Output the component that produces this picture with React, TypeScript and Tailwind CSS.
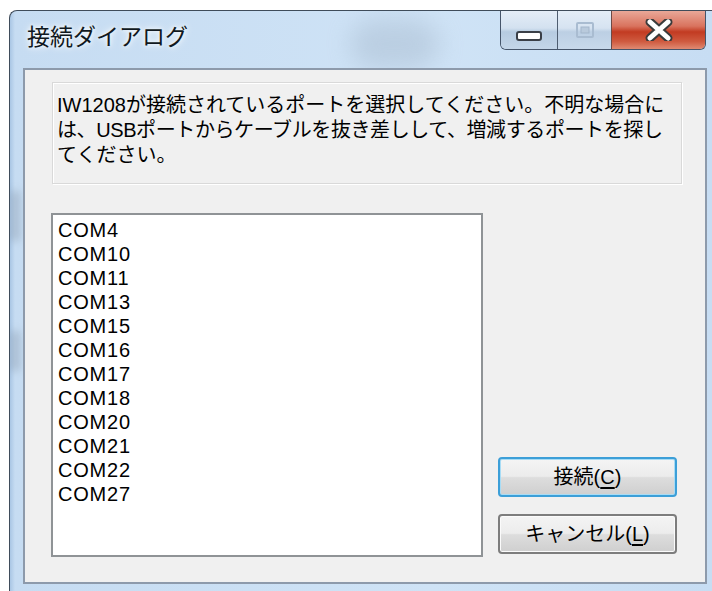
import React from "react";

const ports = [
  "COM4",
  "COM10",
  "COM11",
  "COM13",
  "COM15",
  "COM16",
  "COM17",
  "COM18",
  "COM20",
  "COM21",
  "COM22",
  "COM27",
];

function MinimizeGlyph() {
  return (
    <svg width="26" height="10" viewBox="0 0 26 10">
      <rect x="1" y="1" width="24" height="8" rx="2" fill="#ffffff" stroke="#3a3f47" strokeWidth="2" />
    </svg>
  );
}

function MaximizeGlyph() {
  return (
    <svg width="18" height="16" viewBox="0 0 18 16">
      <rect x="1" y="1" width="16" height="14" rx="1" fill="none" stroke="#a9bcd1" strokeWidth="2" />
      <rect x="5" y="5" width="8" height="6" fill="#b9cadc" stroke="#a3b6cb" strokeWidth="1" />
    </svg>
  );
}

function CloseGlyph() {
  return (
    <svg width="28" height="22" viewBox="0 0 28 22">
      <path d="M5 3 L23 19 M23 3 L5 19" stroke="#3b3b3b" strokeWidth="9" strokeLinecap="round" />
      <path d="M5 3 L23 19 M23 3 L5 19" stroke="#ffffff" strokeWidth="5" strokeLinecap="round" />
    </svg>
  );
}

function DialogButton({
  label,
  accel,
  primary,
}: {
  label: string;
  accel: string;
  primary?: boolean;
}) {
  return (
    <button
      className={
        primary
          ? "h-[40px] w-full rounded-[4px] border-2 border-[#3c9fd8] bg-[linear-gradient(180deg,#f4f4f4_0%,#ececec_48%,#dddddd_52%,#cfcfcf_100%)] text-[20px] leading-[24px] text-black shadow-[inset_0_0_0_1px_#a8dcf5]"
          : "h-[40px] w-full rounded-[4px] border-2 border-[#7d7d7d] bg-[linear-gradient(180deg,#f4f4f4_0%,#ececec_48%,#dddddd_52%,#cfcfcf_100%)] text-[20px] leading-[24px] text-black shadow-[inset_0_0_0_1px_#fbfbfb]"
      }
    >
      {label}(<span className="underline underline-offset-[3px]">{accel}</span>)
    </button>
  );
}

export default function App() {
  return (
    <div className="h-[591px] w-[712px] overflow-hidden bg-white font-['Liberation_Sans','Noto_Sans_CJK_JP',sans-serif]">
      <div className="relative ml-[9px] mt-[10px] flex h-[600px] w-[703px] flex-col overflow-hidden rounded-tl-[8px] border-l border-t border-[#3f4c5a] bg-[linear-gradient(90deg,#a9c6e4_0px,#c6dcf2_5px,#cfe3f6_60%,#c7ddf3_100%)]">
        {/* glass haze behind the caption */}
        <div className="absolute left-[340px] top-[8px] h-[50px] w-[90px] rounded-full bg-[#9fb2c6] opacity-40 blur-[12px]" />
        <div className="absolute left-[0px] top-[180px] h-[50px] w-[10px] bg-[#7d8da0] opacity-40 blur-[4px]" />
        <div className="absolute left-[0px] top-[320px] h-[40px] w-[10px] bg-[#7d8da0] opacity-40 blur-[4px]" />

        {/* caption */}
        <div className="relative flex h-[57px] items-start">
          <div className="pl-[17px] pt-[12px] text-[23px] leading-[28px] text-[#101820] [text-shadow:0_0_8px_#ffffff,0_0_4px_#ffffff]">
            接続ダイアログ
          </div>
          <div className="ml-auto mr-[6px] flex h-[39px] overflow-hidden rounded-b-[6px] border-x border-b border-[#46556a]">
            <div className="flex w-[57px] items-end justify-center border-r border-[#4e5d70] bg-[linear-gradient(180deg,#e4edf7_0%,#d3e1f0_45%,#b6cbe0_55%,#c4d6e9_100%)] pb-[8px]">
              <MinimizeGlyph />
            </div>
            <div className="flex w-[54px] items-center justify-center border-r border-[#6f4a45] bg-[linear-gradient(180deg,#e4edf7_0%,#d6e3f1_45%,#bccfe3_55%,#c8d9eb_100%)]">
              <MaximizeGlyph />
            </div>
            <div className="flex w-[93px] items-center justify-center bg-[linear-gradient(180deg,#e9a898_0%,#d9735e_40%,#c23b22_55%,#cf5a3f_80%,#e08a72_100%)]">
              <CloseGlyph />
            </div>
          </div>
        </div>

        {/* client area */}
        <div className="relative ml-[13px] mr-[5px] flex h-[516px] flex-col border-2 border-[#8d9aab] bg-[#f0f0f0]">
          <div className="ml-[27px] mt-[12px] h-[102px] w-[630px] border border-[#d9d9d9] bg-[#f0f0f0] pl-[4px] pt-[10px] text-[20px] leading-[25px] text-black shadow-[inset_1px_1px_0_#ffffff,1px_1px_0_#ffffff]">
            <div className="whitespace-nowrap">IW1208が接続されているポートを選択してください。不明な場合に</div>
            <div className="whitespace-nowrap tracking-[-0.4px]">は、USBポートからケーブルを抜き差しして、増減するポートを探し</div>
            <div className="whitespace-nowrap">てください。</div>
          </div>

          <div className="ml-[26px] mt-[29px] flex">
            <div className="h-[344px] w-[432px] border-2 border-[#8f9396] bg-white pl-[5px] pt-[3px]">
              {ports.map((p) => (
                <div key={p} className="text-[20px] leading-[24px] tracking-[0.8px] text-black">
                  {p}
                </div>
              ))}
            </div>
            <div className="ml-[15px] flex w-[179px] flex-col justify-end gap-[17px] pb-[3px]">
              <DialogButton label="接続" accel="C" primary />
              <DialogButton label="キャンセル" accel="L" />
            </div>
          </div>
        </div>
      </div>
    </div>
  );
}
